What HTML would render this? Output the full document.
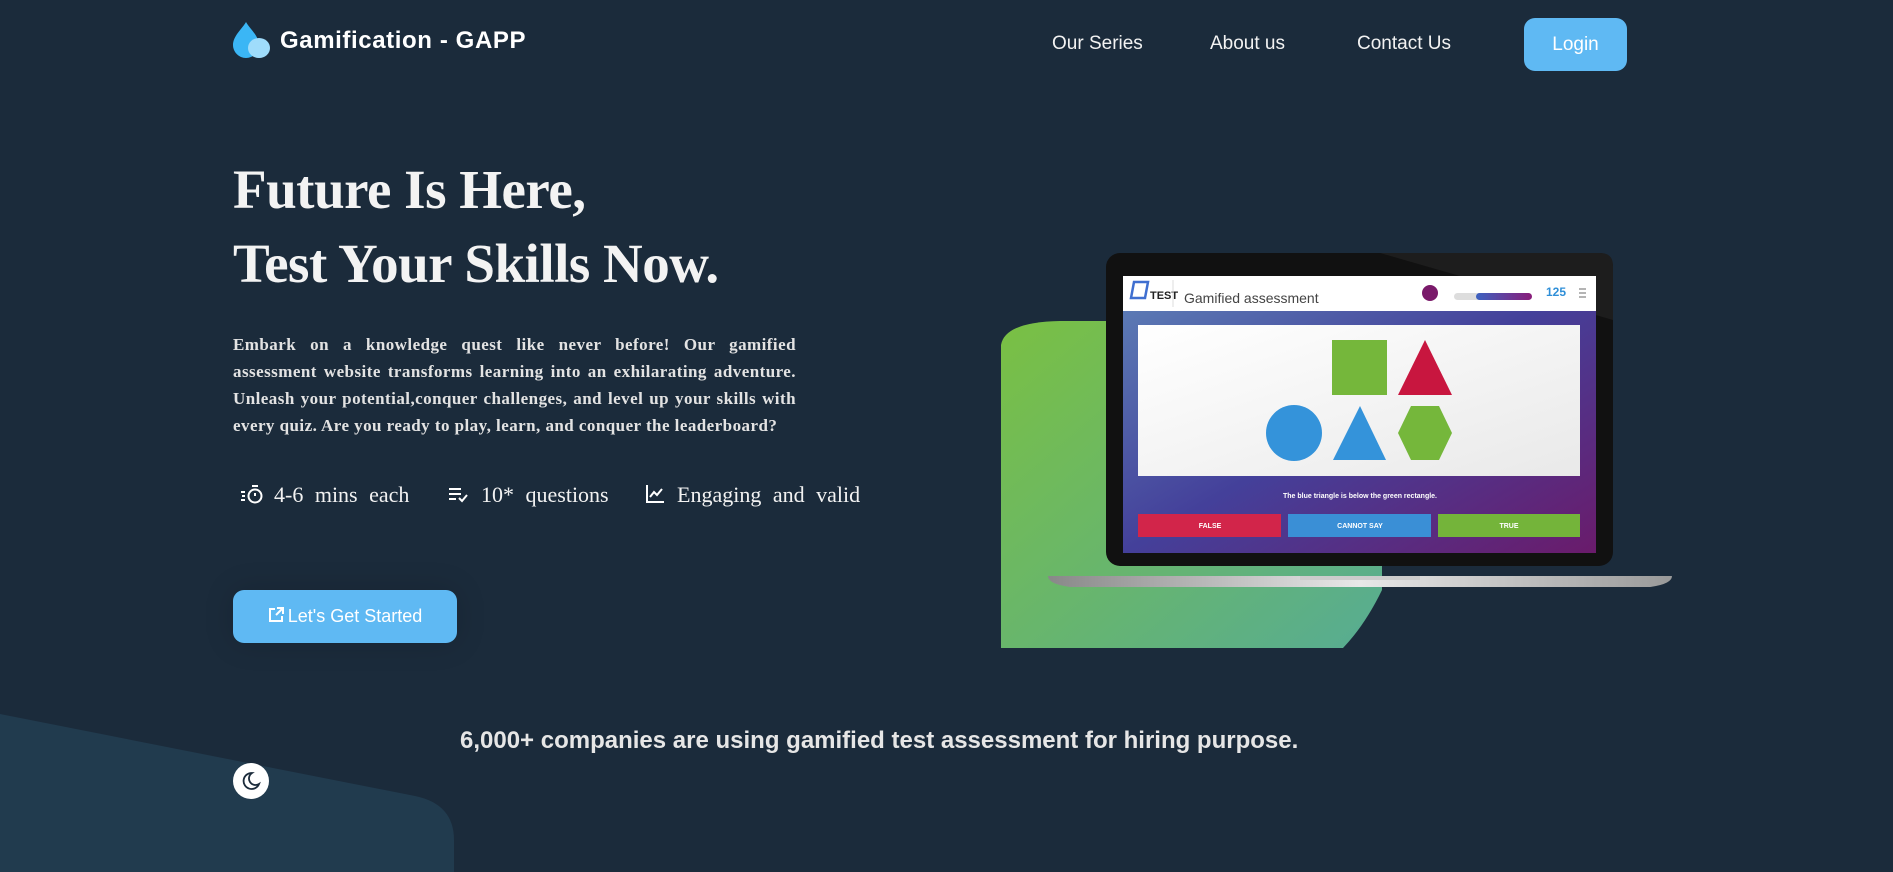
<!DOCTYPE html>
<html><head><meta charset="utf-8">
<style>
*{margin:0;padding:0;box-sizing:border-box}
body{width:1893px;height:872px;overflow:hidden;background:#1b2b3b;position:relative;font-family:"Liberation Sans",sans-serif;color:#fff}
.abs{position:absolute}
.nav{font-size:19px;color:#f2f2f2;top:33px}
h1{font-family:"Liberation Serif",serif;font-weight:bold;font-size:55px;color:#f3f3f3;letter-spacing:-0.5px;position:absolute;left:233px;line-height:74px;top:153px;white-space:nowrap}
.para{left:233px;top:331px;width:563px;font-family:"Liberation Serif",serif;font-weight:bold;font-size:17px;letter-spacing:0.45px;line-height:27px;color:#e3e3e3}
.para div{text-align:justify;text-align-last:justify;white-space:nowrap}
.para div.l{text-align-last:left}
.feat{top:482px;font-family:"Liberation Serif",serif;font-size:22px;color:#f2f2f2;word-spacing:6px;white-space:nowrap}
</style></head><body>
<svg class="abs" style="left:0;top:700px" width="460" height="172"><path d="M0 14 L415 96 Q454 104 454 140 L454 172 L0 172 Z" fill="#213b4e"/></svg>

<svg class="abs" style="left:232px;top:21px" width="40" height="38" viewBox="0 0 40 38">
<path d="M14 1 C10 8 1 15 1 24 C1 31 7 37 14 37 C21 37 27 31 27 24 C27 15 18 8 14 1Z" fill="#3bb6f5"/>
<ellipse cx="27" cy="27" rx="11" ry="10" fill="#9fdcfb"/></svg>
<div class="abs" style="left:280px;top:27px;font-size:24px;font-weight:bold;letter-spacing:0.6px">Gamification - GAPP</div>
<div class="abs nav" style="left:1052px">Our Series</div>
<div class="abs nav" style="left:1210px">About us</div>
<div class="abs nav" style="left:1357px">Contact Us</div>
<div class="abs" style="left:1524px;top:18px;width:103px;height:53px;background:#5fb9f3;border-radius:11px;font-size:19px;text-align:center;line-height:53px">Login</div>

<h1>Future Is Here,<br>Test Your Skills Now.</h1>
<div class="abs para">
<div>Embark on a knowledge quest like never before! Our gamified</div>
<div>assessment website transforms learning into an exhilarating adventure.</div>
<div>Unleash your potential,conquer challenges, and level up your skills with</div>
<div class="l">every quiz. Are you ready to play, learn, and conquer the leaderboard?</div>
</div>

<svg class="abs" style="left:240px;top:484px" width="24" height="22" viewBox="0 0 24 22"><g stroke="#fff" stroke-width="2" fill="none"><circle cx="15" cy="12" r="6.5"/><path d="M15 12V9M12 2h6M1 8h4M2 12h3M1 16h4"/></g></svg>
<div class="abs feat" style="left:274px">4-6 mins each</div>
<svg class="abs" style="left:448px;top:487px" width="20" height="16" viewBox="0 0 20 16"><g stroke="#fff" stroke-width="2" fill="none"><path d="M1 2h12M1 7h12M1 12h7M11 11l3 3 5-6"/></g></svg>
<div class="abs feat" style="left:481px">10* questions</div>
<svg class="abs" style="left:645px;top:484px" width="20" height="20" viewBox="0 0 20 20"><g stroke="#fff" stroke-width="2" fill="none"><path d="M2 1v17h17M5 13l4-5 3 3 5-6"/></g></svg>
<div class="abs feat" style="left:677px">Engaging and valid</div>

<div class="abs" style="left:233px;top:590px;width:224px;height:53px;background:#5fb9f3;border-radius:11px;font-size:18px;line-height:53px;text-align:center;box-shadow:0 0 30px rgba(0,0,0,0.15)">
<svg width="16" height="16" viewBox="0 0 16 16" style="vertical-align:-1px;margin-right:4px"><g stroke="#fff" stroke-width="2" fill="none"><path d="M7 2H2v12h12V9M9 1h6v6M15 1L8 8"/></g></svg>Let's Get Started</div>

<div class="abs" style="left:460px;top:727px;font-size:24px;font-weight:bold;color:#e6e6e6;letter-spacing:0px">6,000+ companies are using gamified test assessment for hiring purpose.</div>
<div class="abs" style="left:233px;top:763px;width:36px;height:36px;border-radius:50%;background:#fff"></div>
<svg class="abs" style="left:241px;top:771px" width="20" height="20" viewBox="0 0 20 20"><path d="M11 2 A8 8 0 1 0 18 13 A6.5 6.5 0 0 1 11 2Z" stroke="#1b2b3b" stroke-width="1.8" fill="none"/></svg>

<svg class="abs" style="left:0;top:0" width="1893" height="872" viewBox="0 0 1893 872">
<defs>
<linearGradient id="g" x1="0" y1="0" x2="1" y2="1"><stop offset="0" stop-color="#7ac043"/><stop offset="1" stop-color="#57ac93"/></linearGradient>
<linearGradient id="p" x1="0" y1="0" x2="1" y2="1"><stop offset="0" stop-color="#5e82b8"/><stop offset="0.5" stop-color="#44409a"/><stop offset="1" stop-color="#6a1b6b"/></linearGradient>
<linearGradient id="c" x1="0" y1="0" x2="1" y2="1"><stop offset="0" stop-color="#fff"/><stop offset="1" stop-color="#e9e9e9"/></linearGradient>
<linearGradient id="b" x1="0" y1="0" x2="1" y2="0"><stop offset="0" stop-color="#888"/><stop offset="0.5" stop-color="#e8e8e8"/><stop offset="1" stop-color="#999"/></linearGradient>
<linearGradient id="t" x1="0" y1="0" x2="1" y2="0"><stop offset="0" stop-color="#3c62c0"/><stop offset="1" stop-color="#8a1c7a"/></linearGradient>
</defs>
<path d="M1001 648 L1001 345 Q1005 322 1060 321 L1382 321 L1382 590 Q1365 625 1343 648 Z" fill="url(#g)"/>
<rect x="1106" y="253" width="507" height="313" rx="14" fill="#111"/>
<path d="M1380 253 L1600 253 Q1613 253 1613 266 L1613 320 L1380 253Z" fill="#1d1d1d"/>
<rect x="1123" y="276" width="473" height="277" fill="url(#p)"/>
<rect x="1123" y="276" width="473" height="35" fill="#fff"/>
<path d="M1134 282 h14 l-3 16 h-14z" fill="none" stroke="#3f6fd0" stroke-width="2.5"/>
<text x="1150" y="299" font-family="Liberation Sans" font-size="11" font-weight="bold" fill="#222">TEST</text>
<line x1="1173" y1="280" x2="1173" y2="307" stroke="#ddd"/>
<text x="1184" y="303" font-family="Liberation Sans" font-size="14" fill="#444">Gamified assessment</text>
<circle cx="1430" cy="293" r="8" fill="#7a1a6a"/>
<rect x="1454" y="293" width="60" height="7" rx="3.5" fill="#ddd"/>
<rect x="1476" y="293" width="56" height="7" rx="3.5" fill="url(#t)"/>
<text x="1546" y="296" font-family="Liberation Sans" font-size="12" font-weight="bold" fill="#2f8fd8">125</text>
<path d="M1579 289h7M1579 293h7M1579 297h7" stroke="#888" stroke-width="1.2"/>
<rect x="1138" y="325" width="442" height="151" fill="url(#c)"/>
<rect x="1332" y="340" width="55" height="55" fill="#75b73b"/>
<path d="M1425 340 L1452 395 L1398 395Z" fill="#c8163f"/>
<circle cx="1294" cy="433" r="28" fill="#3493da"/>
<path d="M1360 406 L1386 460 L1333 460Z" fill="#3493da"/>
<path d="M1411 406 L1439 406 L1452 433 L1439 460 L1411 460 L1398 433Z" fill="#75b73b"/>
<text x="1360" y="498" text-anchor="middle" font-family="Liberation Sans" font-size="7" font-weight="bold" fill="#fff">The blue triangle is below the green rectangle.</text>
<rect x="1138" y="514" width="143" height="23" fill="#d2254a"/>
<rect x="1288" y="514" width="143" height="23" fill="#3a8fd6"/>
<rect x="1438" y="514" width="142" height="23" fill="#74b43a"/>
<g font-family="Liberation Sans" font-size="7" font-weight="bold" fill="#fff" text-anchor="middle">
<text x="1210" y="528">FALSE</text><text x="1360" y="528">CANNOT SAY</text><text x="1509" y="528">TRUE</text></g>
<path d="M1048 576 L1672 576 Q1672 584 1650 587 L1070 587 Q1048 584 1048 576Z" fill="url(#b)"/>
<rect x="1300" y="576" width="120" height="4" fill="#ccc"/>
</svg>
</body></html>
